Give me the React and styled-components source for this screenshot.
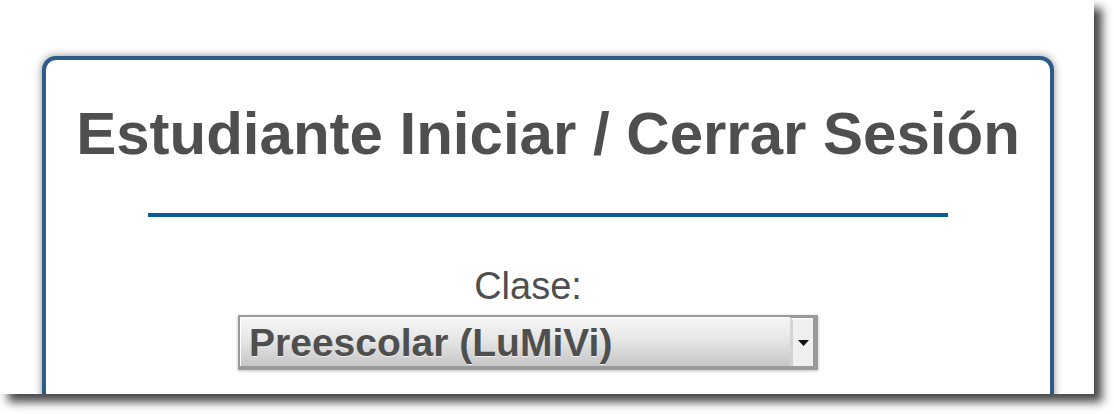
import React from "react";
import styled, { createGlobalStyle } from "styled-components";

const GlobalStyle = createGlobalStyle`
  html, body {
    margin: 0;
    padding: 0;
    background: #ffffff;
  }
  body {
    font-family: "Liberation Sans", Arial, Helvetica, sans-serif;
  }
`;

const Screen = styled.div`
  width: 1114px;
  height: 414px;
  background: #ffffff;
  overflow: hidden;
`;

const Page = styled.div`
  width: 1094px;
  height: 394px;
  background: #ffffff;
  overflow: hidden;
  box-shadow: 8px 8px 9px rgba(0, 0, 0, 0.72);
  padding-top: 56px;
  padding-left: 42px;
  box-sizing: border-box;
`;

const Card = styled.section`
  width: 1012px;
  height: 520px;
  box-sizing: border-box;
  border: 4px solid #2d5b8a;
  border-radius: 14px;
  background: #ffffff;
  box-shadow: 0 0 9px rgba(0, 0, 0, 0.45);
  padding-top: 39px;
  display: flex;
  flex-direction: column;
  align-items: center;
`;

const Title = styled.h1`
  margin: 0;
  font-size: 60px;
  line-height: 69px;
  font-weight: 700;
  color: #4f4f4f;
  text-align: center;
`;

const Rule = styled.hr`
  width: 800px;
  height: 4px;
  margin: 45px 0 0 0;
  border: none;
  background: #0b5c97;
`;

const FormGroup = styled.div`
  width: 580px;
  margin-top: 47px;
  margin-right: 40px;
  display: flex;
  flex-direction: column;
  align-items: center;
`;

const Label = styled.label`
  font-size: 38px;
  line-height: 44px;
  color: #4f4f4f;
`;

const SelectBox = styled.div`
  margin-top: 7px;
  width: 580px;
  height: 55px;
  box-sizing: border-box;
  display: flex;
  border-style: solid;
  border-color: #9a9a9a;
  border-width: 2px 5px 4px 2px;
  box-shadow: 0 1px 3px rgba(0, 0, 0, 0.25);
  background: #9a9a9a;
`;

const SelectValue = styled.div`
  flex: 1;
  display: flex;
  align-items: center;
  padding-left: 8px;
  box-sizing: border-box;
  border-top: 1px solid #ffffff;
  border-left: 1px solid #ffffff;
  background: linear-gradient(to bottom, #f6f6f6 0%, #e6e6e6 45%, #c6c6c6 100%);
  font-size: 39px;
  font-weight: 700;
  color: #4f4f4f;
  line-height: 45px;
  text-shadow: 0 1px 0 rgba(255, 255, 255, 0.6);
`;

const ArrowButton = styled.div`
  width: 23px;
  margin-top: 1px;
  box-sizing: border-box;
  display: flex;
  align-items: center;
  justify-content: center;
  background: #efefef;
  border-left: 3px solid #d4d4d4;
  border-top: 2px solid #f8f8f8;
`;

const Arrow = () => (
  <svg width="11" height="6" viewBox="0 0 11 6">
    <polygon points="0,0 11,0 5.5,6" fill="#111" />
  </svg>
);

export default function App() {
  return (
    <>
      <GlobalStyle />
      <Screen>
        <Page>
          <Card>
            <Title>Estudiante Iniciar / Cerrar Sesión</Title>
            <Rule />
            <FormGroup>
              <Label>Clase:</Label>
              <SelectBox>
                <SelectValue>Preescolar (LuMiVi)</SelectValue>
                <ArrowButton>
                  <Arrow />
                </ArrowButton>
              </SelectBox>
            </FormGroup>
          </Card>
        </Page>
      </Screen>
    </>
  );
}
